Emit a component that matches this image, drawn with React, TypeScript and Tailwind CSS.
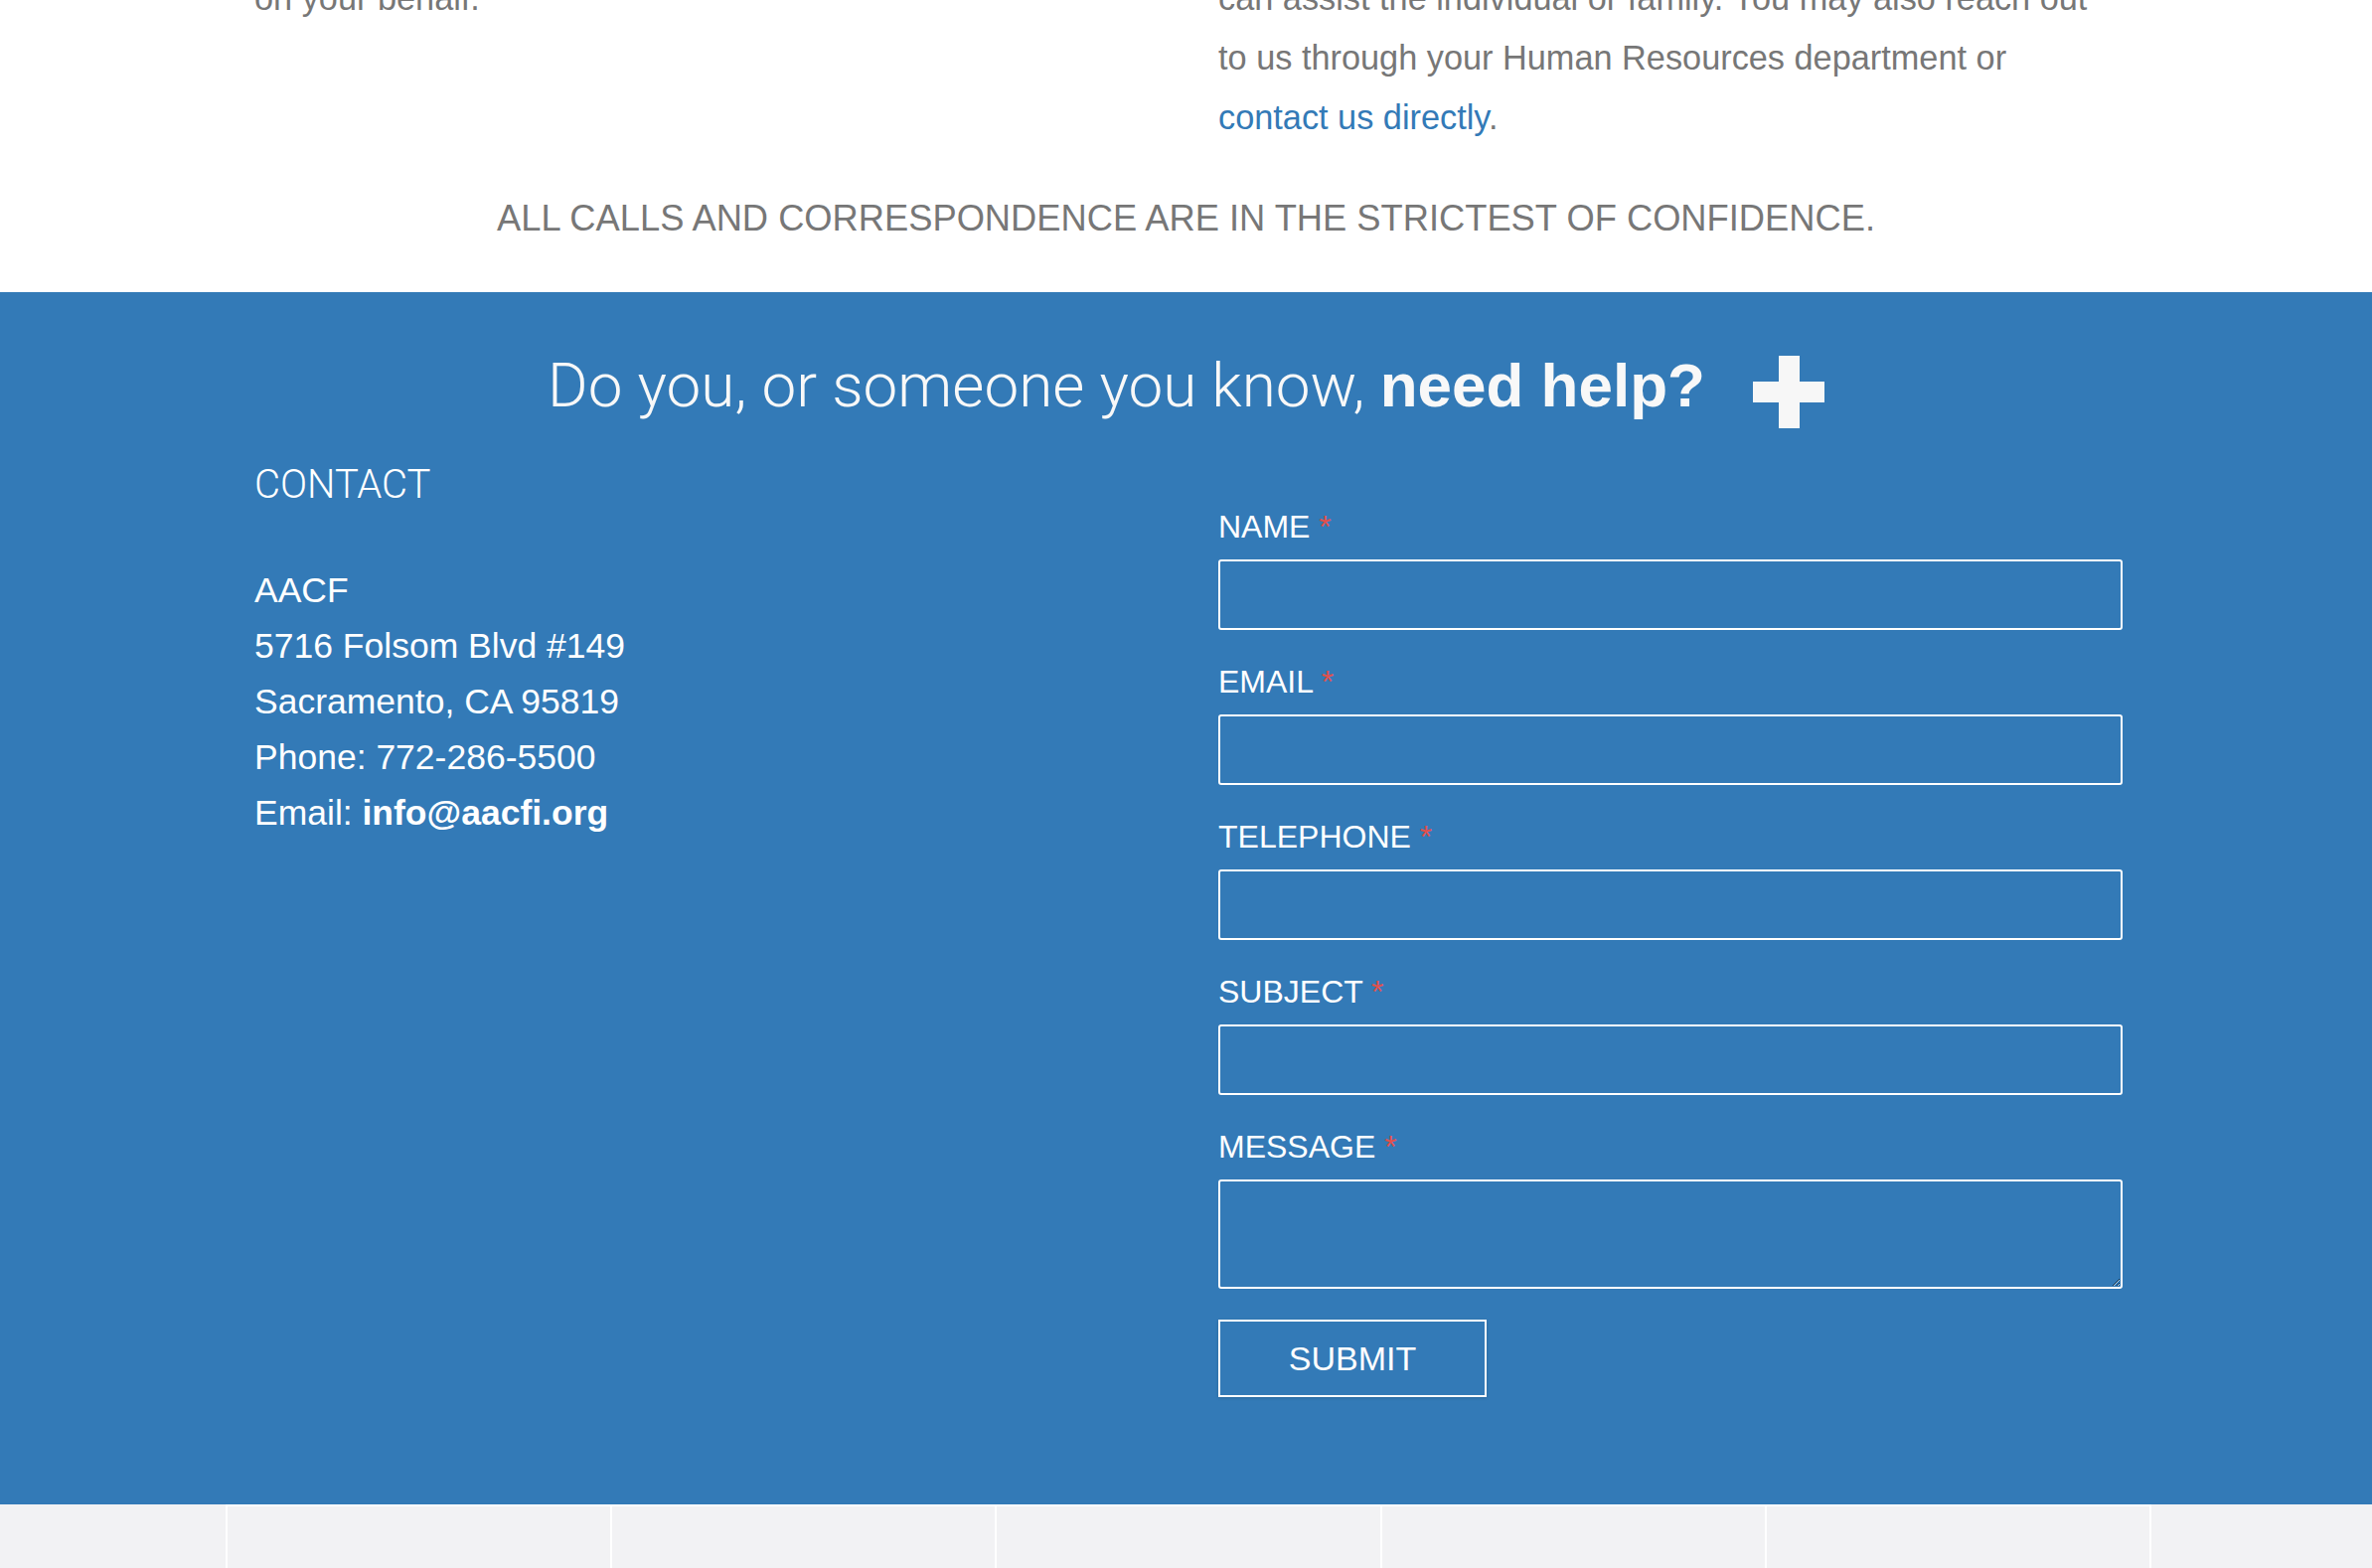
import React from 'react'

const fields = [
  { label: 'NAME', type: 'text' },
  { label: 'EMAIL', type: 'email' },
  { label: 'TELEPHONE', type: 'tel' },
  { label: 'SUBJECT', type: 'text' },
]

function PlusIcon() {
  return (
    <svg width="72" height="73" viewBox="0 0 72 73" className="ml-[48px] mt-[14px] shrink-0">
      <rect x="26" y="0" width="21" height="73" fill="#f7f7f7" />
      <rect x="0" y="26" width="72" height="21" fill="#f7f7f7" />
    </svg>
  )
}

export default function App(): React.JSX.Element {
  return (
    <div className="min-h-screen overflow-hidden bg-white font-['Liberation_Sans',Arial,sans-serif]">
      {/* intro text, scrolled partly out of view */}
      <section className="flex flex-col bg-white">
        <div className="-mt-[32px] ml-[256px] grid w-[1880px] grid-cols-2 gap-x-[60px] text-[34.3px] leading-[60px] text-[#777]">
          <p className="whitespace-nowrap">on your behalf.</p>
          <p className="whitespace-nowrap">
            can assist the individual or family. You may also reach out
            <br />
            to us through your Human Resources department or
            <br />
            <a href="#contact" className="text-[#337ab7]">
              contact us directly
            </a>
            .
          </p>
        </div>
        <p className="mt-[50px] pb-[52px] text-center text-[36.3px] leading-[44px] text-[#777]">
          ALL CALLS AND CORRESPONDENCE ARE IN THE STRICTEST OF CONFIDENCE.
        </p>
      </section>

      {/* help / contact form */}
      <section id="contact" className="bg-[#337ab7] pb-[108px] pt-[50px] text-white">
        <h2 className="flex items-center justify-center">
          <span className="whitespace-nowrap font-['Roboto',sans-serif] text-[62px] font-light leading-[78px] text-[#f8f8f8]">
            Do you, or someone you know,{' '}
            <strong className="font-['Liberation_Sans',Arial,sans-serif] text-[62px] font-bold">need help?</strong>
          </span>
          <PlusIcon />
        </h2>

        <div className="ml-[256px] mt-[34px] grid w-[1880px] grid-cols-2 gap-x-[60px]">
          <div>
            <h3 className="font-['Roboto',sans-serif] text-[40px] font-light leading-[45px]">CONTACT</h3>
            <div className="mt-[56px] text-[35.5px] leading-[56px]">
              <p>AACF</p>
              <p>5716 Folsom Blvd #149</p>
              <p>Sacramento, CA 95819</p>
              <p>Phone: 772-286-5500</p>
              <p>
                Email: <a href="mailto:info@aacfi.org" className="font-bold">info@aacfi.org</a>
              </p>
            </div>
          </div>

          <form className="flex flex-col pt-[47px]" onSubmit={(e) => e.preventDefault()}>
            <div className="flex flex-col gap-[34px]">
              {fields.map((f) => (
                <label key={f.label} className="flex flex-col">
                  <span className="mb-[14px] text-[32px] leading-[37px]">
                    {f.label} <span className="text-[#e2504c]">*</span>
                  </span>
                  <input
                    type={f.type}
                    className="h-[71px] w-full rounded-[3px] border-2 border-white bg-transparent px-3 text-[30px] text-white outline-none"
                  />
                </label>
              ))}
              <label className="flex flex-col">
                <span className="mb-[14px] text-[32px] leading-[37px]">
                  MESSAGE <span className="text-[#e2504c]">*</span>
                </span>
                <textarea className="h-[110px] w-full resize-y rounded-[3px] border-2 border-white bg-transparent px-3 text-[30px] text-white outline-none" />
              </label>
            </div>
            <button
              type="submit"
              className="mt-[31px] h-[78px] w-[270px] border-2 border-white text-[34px] text-white shadow-[0_1px_3px_rgba(0,0,0,0.15)]"
            >
              SUBMIT
            </button>
          </form>
        </div>
      </section>

      {/* footer tiles */}
      <section className="bg-[#f2f2f4]">
        <div className="ml-[227px] grid w-[1938px] grid-cols-5 gap-[2px] bg-white px-[2px] pt-[2px]">
          {[1, 2, 3, 4, 5].map((i) => (
            <div key={i} className="h-[120px] bg-[#f2f2f4]" />
          ))}
        </div>
      </section>
    </div>
  )
}
